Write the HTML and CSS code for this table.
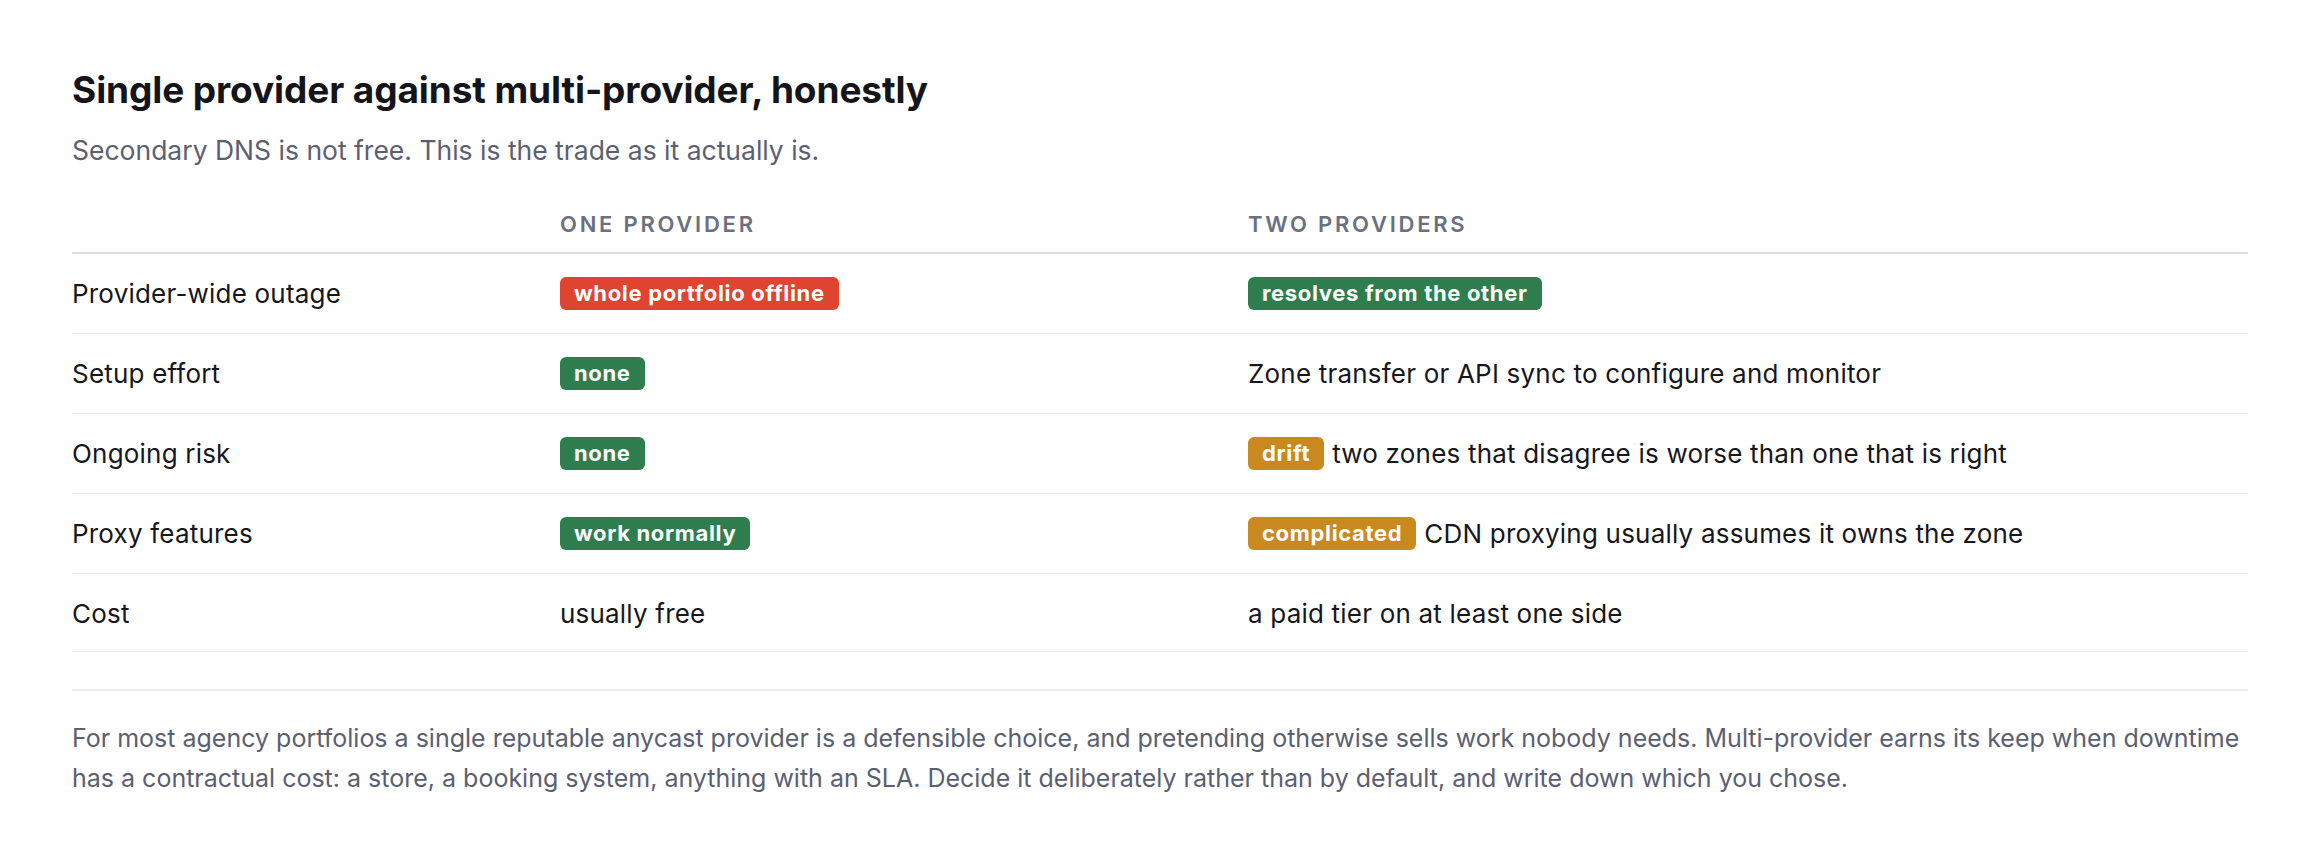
FILE: index.html
```html
<!DOCTYPE html>
<html lang="en">
<head>
    <meta charset="UTF-8">
    <meta name="viewport" content="width=device-width, initial-scale=1.0">
    <title>Single provider against multi-provider</title>
    <link rel="stylesheet" href="styles.css">
</head>
<body>
    <section class="compare">
        <h1 class="title">Single provider against multi-provider, honestly</h1>
        <p class="subtitle">Secondary DNS is not free. This is the trade as it actually is.</p>

        <table class="trade">
            <thead>
                <tr>
                    <th class="col-label"></th>
                    <th class="col-one">One provider</th>
                    <th>Two providers</th>
                </tr>
            </thead>
            <tbody>
                <tr>
                    <td>Provider-wide outage</td>
                    <td><span class="tag bad">whole portfolio offline</span></td>
                    <td><span class="tag good">resolves from the other</span></td>
                </tr>
                <tr>
                    <td>Setup effort</td>
                    <td><span class="tag good">none</span></td>
                    <td>Zone transfer or API sync to configure and monitor</td>
                </tr>
                <tr>
                    <td>Ongoing risk</td>
                    <td><span class="tag good">none</span></td>
                    <td><span class="tag warn">drift</span>two zones that disagree is worse than one that is right</td>
                </tr>
                <tr>
                    <td>Proxy features</td>
                    <td><span class="tag good">work normally</span></td>
                    <td><span class="tag warn">complicated</span>CDN proxying usually assumes it owns the zone</td>
                </tr>
                <tr>
                    <td>Cost</td>
                    <td>usually free</td>
                    <td>a paid tier on at least one side</td>
                </tr>
            </tbody>
        </table>

        <hr class="divider">

        <p class="verdict">For most agency portfolios a single reputable anycast provider is a defensible choice, and pretending otherwise sells work nobody needs. Multi-provider earns its keep when downtime has a contractual cost: a store, a booking system, anything with an SLA. Decide it deliberately rather than by default, and write down which you chose.</p>
    </section>
</body>
</html>
```

FILE: styles.css
```css
* {
    box-sizing: border-box;
    margin: 0;
    padding: 0;
}

body {
    font-family: Inter, "Noto Sans", sans-serif;
    background-color: #ffffff;
    color: #16171c;
    padding: 68px 72px 0;
}

.title {
    font-size: 37px;
    font-weight: 700;
    line-height: 43px;
    letter-spacing: -0.1px;
    color: #14151a;
}

.subtitle {
    margin-top: 22px;
    font-size: 26.5px;
    line-height: 34px;
    color: #5a6072;
}

.trade {
    width: 100%;
    margin-top: 45px;
    border-collapse: collapse;
    font-size: 26px;
    letter-spacing: 0.2px;
}

.trade th {
    text-align: left;
    font-size: 22px;
    font-weight: 600;
    line-height: 24px;
    letter-spacing: 0.125em;
    text-transform: uppercase;
    color: #6b7080;
    padding: 0 0 16px;
    border-bottom: 2px solid #d9dde6;
}

.col-label {
    width: 488px;
}

.col-one {
    width: 688px;
}

.trade td {
    padding: 22px 0;
    line-height: 35px;
    border-bottom: 1px solid #ececf1;
    vertical-align: middle;
}

.trade tr:last-child td {
    padding-bottom: 20px;
}

.tag {
    display: inline-block;
    height: 33px;
    margin-top: 1px;
    padding: 0 14px;
    border-radius: 6px;
    font-size: 22px;
    font-weight: 700;
    line-height: 33px;
    letter-spacing: 0.03em;
    color: #ffffff;
    vertical-align: top;
}

.bad {
    background-color: #df4431;
}

.good {
    background-color: #2e7d4e;
}

.warn {
    background-color: #c9891f;
    margin-right: 8px;
}

.divider {
    border: none;
    border-top: 2px solid #e8e8ee;
    margin-top: 37px;
}

.verdict {
    margin-top: 27px;
    font-size: 25px;
    line-height: 40px;
    color: #5a6072;
}
```
